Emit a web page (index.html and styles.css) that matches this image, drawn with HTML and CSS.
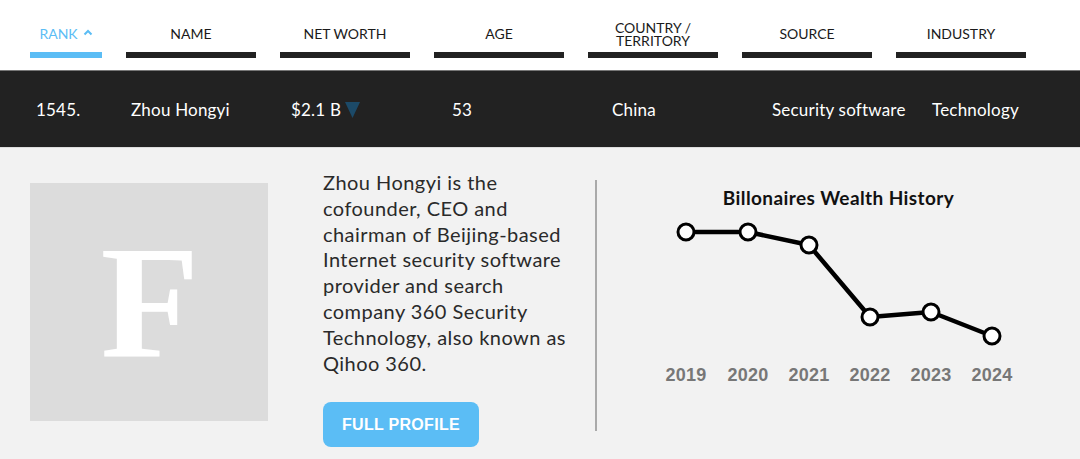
FILE: index.html
```html
<!DOCTYPE html>
<html lang="en">
<head>
    <meta charset="UTF-8">
    <title>Zhou Hongyi - Billionaires</title>
    <link rel="stylesheet" href="styles.css">
</head>
<body>

    <div class="list-head">
        <div class="head-cell rank active">RANK
            <svg class="sort-arrow" width="10" height="7" viewBox="0 0 10 7"><polyline points="1.5,5.5 5,2 8.5,5.5" fill="none" stroke="#5bbdf5" stroke-width="2"/></svg>
        </div>
        <div class="head-cell">NAME</div>
        <div class="head-cell">NET WORTH</div>
        <div class="head-cell">AGE</div>
        <div class="head-cell two-line">COUNTRY /<br>TERRITORY</div>
        <div class="head-cell">SOURCE</div>
        <div class="head-cell">INDUSTRY</div>
    </div>

    <div class="person-row">
        <div>1545.</div>
        <div>Zhou Hongyi</div>
        <div class="worth">$2.1 B
            <svg class="down" width="15" height="16" viewBox="0 0 15 16"><polygon points="0,0 15,0 7.5,16" fill="#1c4a68"/></svg>
        </div>
        <div>53</div>
        <div>China</div>
        <div>Security software</div>
        <div>Technology</div>
    </div>

    <div class="details">
        <div class="photo"><span>F</span></div>

        <div class="bio">
            <p>Zhou Hongyi is the cofounder, CEO and chairman of Beijing-based Internet security software provider and search company 360 Security Technology, also known as Qihoo 360.</p>
            <button class="profile-btn">FULL PROFILE</button>
        </div>

        <div class="divider"></div>

        <div class="chart">
            <h3>Billonaires Wealth History</h3>
            <svg width="483" height="180" viewBox="0 0 483 180">
                <polyline points="89,22 151,22 212,35 273,107 334,102 395,126" fill="none" stroke="#000" stroke-width="4.5" stroke-linejoin="round"/>
                <g fill="#fff" stroke="#000" stroke-width="3">
                    <circle cx="89" cy="22" r="8"/>
                    <circle cx="151" cy="22" r="8"/>
                    <circle cx="212" cy="35" r="8"/>
                    <circle cx="273" cy="107" r="8"/>
                    <circle cx="334" cy="102" r="8"/>
                    <circle cx="395" cy="126" r="8"/>
                </g>
                <g class="years" text-anchor="middle">
                    <text x="89" y="171">2019</text>
                    <text x="151" y="171">2020</text>
                    <text x="212" y="171">2021</text>
                    <text x="273" y="171">2022</text>
                    <text x="334" y="171">2023</text>
                    <text x="395" y="171">2024</text>
                </g>
            </svg>
        </div>
    </div>

</body>
</html>
```

FILE: styles.css
```css
body {
    margin: 0;
    font-family: 'Lato', sans-serif;
    background-color: #fff;
    color: #222;
}
.list-head {
    display: flex;
    gap: 24px;
    padding: 15px 0 12px 30px;
    height: 43px;
}
.head-cell {
    width: 130px;
    height: 37px;
    display: flex;
    align-items: center;
    justify-content: center;
    text-align: center;
    font-size: 14px;
    line-height: 14px;
    color: #1a1a1a;
    border-bottom: 6px solid #222;
    box-sizing: content-box;
}
.head-cell.two-line {
    line-height: 13px;
}
.head-cell.rank {
    width: 72px;
}
.head-cell.active {
    color: #5bbdf5;
    border-bottom-color: #5bbdf5;
}
.sort-arrow {
    margin-left: 5px;
    position: relative;
    top: -1px;
}
.person-row {
    display: grid;
    grid-template-columns: 95px 160px 161px 160px 160px 160px 1fr;
    align-items: center;
    height: 76px;
    padding-left: 36px;
    background-color: #222;
    border-top: 1px solid #777;
    border-bottom: 1px solid #ddd;
    color: #fff;
    font-size: 17px;
    letter-spacing: 0.2px;
}
.worth {
    display: flex;
    align-items: center;
    gap: 4px;
}
.down {
    position: relative;
    top: 1px;
}
.details {
    display: flex;
    align-items: flex-start;
    background-color: #f2f2f2;
    padding: 22px 0 12px 30px;
    height: 277px;
}
.photo {
    width: 238px;
    height: 238px;
    margin-top: 13px;
    background-color: #dcdcdc;
    display: flex;
    align-items: center;
    justify-content: center;
    flex-shrink: 0;
}
.photo span {
    font-family: 'Liberation Serif', serif;
    font-weight: 700;
    font-size: 162px;
    line-height: 1;
    color: #fff;
    position: relative;
    top: 1px;
    left: 1px;
}
.bio {
    width: 250px;
    margin-left: 55px;
    flex-shrink: 0;
}
.bio p {
    margin: 0;
    font-size: 20px;
    line-height: 25.8px;
    letter-spacing: 0.45px;
    color: #2a2a2a;
}
.profile-btn {
    margin-top: 26px;
    width: 156px;
    height: 45px;
    background-color: #5bbdf5;
    color: #fff;
    border: none;
    border-radius: 8px;
    font-family: 'Liberation Sans', sans-serif;
    font-weight: 700;
    font-size: 16px;
    letter-spacing: 0.3px;
}
.divider {
    width: 2px;
    height: 251px;
    margin-top: 10px;
    margin-left: 22px;
    background-color: #aaa;
    flex-shrink: 0;
}
.chart {
    width: 483px;
    margin-top: 16px;
}
.chart h3 {
    margin: 0;
    text-align: center;
    font-size: 19px;
    line-height: 24px;
    font-weight: 700;
    letter-spacing: 0.4px;
    color: #111;
}
.chart svg {
    display: block;
}
.years text {
    font-family: 'Liberation Sans', sans-serif;
    font-weight: 700;
    font-size: 18px;
    letter-spacing: 0.3px;
    fill: #777;
}
```
